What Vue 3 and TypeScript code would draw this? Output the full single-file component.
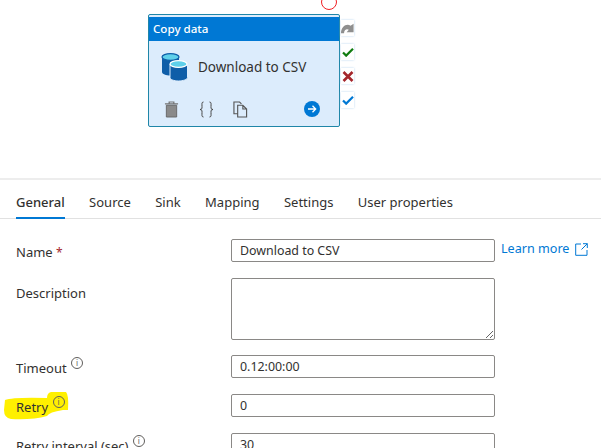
<script setup lang="ts">
const tabs = ['General', 'Source', 'Sink', 'Mapping', 'Settings', 'User properties']
</script>

<template>
  <div class="page">
    <div class="canvas">
      <div class="red-circle"></div>
      <div class="node">
        <div class="node-head">Copy data</div>
        <div class="node-body">
          <svg class="db" width="34" height="30" viewBox="0 0 34 30">
            <path d="M1 5v15c0 2 4 3.500 8.500 3.500S18 22 18 20V5z" fill="#0f5ea8" />
            <ellipse cx="9.500" cy="5" rx="8.500" ry="3.400" fill="#5fd0ea" stroke="#0f5ea8" stroke-width="1.200" />
            <path d="M9 12v13.500c0 2 4 3.500 8.500 3.500s9-1.500 9-3.500V12z" fill="#0f5ea8" stroke="#dcecfc" stroke-width="1" />
            <ellipse cx="17.500" cy="12" rx="8.500" ry="3.400" fill="#5fd0ea" stroke="#fff" stroke-width="1.200" />
          </svg>
          <span class="node-name">Download to CSV</span>
        </div>
        <div class="node-tools">
          <svg width="15" height="17" viewBox="0 0 16 18">
            <path d="M1 3h14M5.500 3V1h5v2" fill="none" stroke="#737373" stroke-width="1.300" />
            <path d="M2.500 4.500h11V17h-11z" fill="#8a8a8a" stroke="#666" />
          </svg>
          <svg class="braces" width="15" height="17" viewBox="0 0 15 17">
            <path d="M4.500 1C2.500 1 3 3 3 5.500S3 8 1 8.500c2 .5 2 .5 2 3S2.500 16 4.500 16M10.500 1c2 0 1.500 2 1.500 4.500s0 2.500 2 3c-2 .5-2 .5-2 3s.5 4.500-1.500 4.500" fill="none" stroke="#444" stroke-width="1" />
          </svg>
          <svg class="copy" width="15" height="17" viewBox="0 0 16 18">
            <path d="M5 13.500H1V1h6l2 2" fill="none" stroke="#555" stroke-width="1.200" />
            <path d="M5 4.500h5.500l4 4v8.500H5z M10.500 4.500v4h4" fill="none" stroke="#555" stroke-width="1.200" />
          </svg>
          <svg class="go" width="16" height="16" viewBox="0 0 16 16">
            <circle cx="8" cy="8" r="8" fill="#0078d4" />
            <path d="M4 8h7.500M8.500 4.800 11.700 8l-3.200 3.200" fill="none" stroke="#fff" stroke-width="1.300" />
          </svg>
        </div>
        <div class="side">
          <span class="side-btn">
            <svg width="13" height="12" viewBox="0 0 15 12">
              <path d="M0 12C0 4 7 0 11 3.500L14.500 1v10h-8L9 8C7 6.500 3.500 7.500 3.500 12z" fill="#8f8f8f" />
            </svg>
          </span>
          <span class="side-btn">
            <svg width="12" height="10" viewBox="0 0 13 11"><path d="M1 6l3.500 3.500L12 2" fill="none" stroke="#107c10" stroke-width="2.400" /></svg>
          </span>
          <span class="side-btn">
            <svg width="12" height="11" viewBox="0 0 12 11"><path d="M1.500 1l9 9M10.500 1l-9 9" fill="none" stroke="#a4262c" stroke-width="2.600" /></svg>
          </span>
          <span class="side-btn">
            <svg width="12" height="10" viewBox="0 0 13 11"><path d="M1 6l3.500 3.500L12 2" fill="none" stroke="#0078d4" stroke-width="2.400" /></svg>
          </span>
        </div>
      </div>
    </div>

    <div class="tabs">
      <span v-for="(tab, i) in tabs" :key="tab" :class="['tab', { active: i === 0 }]">{{ tab }}</span>
    </div>

    <div class="form">
      <label class="lbl">Name <em>*</em></label>
      <input class="field" value="Download to CSV" />
      <a class="learn">Learn more
        <svg width="13" height="13" viewBox="0 0 13 13">
          <path d="M6 1H.7v11.300H12V7M8 .7h4.300V5M12.300.7 6.500 6.500" fill="none" stroke="#0078d4" stroke-width="1" />
        </svg>
      </a>

      <label class="lbl top">Description</label>
      <textarea class="field area"></textarea>
      <span></span>

      <label class="lbl">Timeout <i class="info">i</i></label>
      <input class="field" value="0.12:00:00" />
      <span></span>

      <label class="lbl">
        <svg class="marker" width="66" height="28" viewBox="0 0 66 28">
          <path d="M2 8Q10 5 44 6 44 1 48 0L63 0Q66 3 65 18L60 18Q46 20 44 24 30 28 8 27 1 26 1 18z" fill="#fff000" />
        </svg>
        <span class="over">Retry <i class="info">i</i></span>
      </label>
      <input class="field" value="0" />
      <span></span>

      <label class="lbl">Retry interval (sec) <i class="info">i</i></label>
      <input class="field" value="30" />
      <span></span>
    </div>
  </div>
</template>

<style>
html,
body {
  margin: 0;
  overflow: hidden;
  background: #fff;
}
</style>

<style scoped>
.page {
  width: 601px;
  height: 448px;
  overflow: hidden;
  font-family: "Noto Sans", "Open Sans", sans-serif;
  font-size: 13px;
  color: #323130;
}

.canvas {
  position: relative;
  height: 178px;
  border-bottom: 2px solid #ededed;
}

.red-circle {
  position: absolute;
  left: 321px;
  top: -6px;
  width: 14px;
  height: 14px;
  border: 1px solid #f01e23;
  border-radius: 50%;
}

.node {
  position: absolute;
  left: 148px;
  top: 14px;
  width: 190px;
  height: 109px;
  padding-top: 2px;
  background: #dcecfc;
  border: 1px solid #1f86a8;
  border-radius: 2px;
}

.node-head {
  height: 24px;
  line-height: 24px;
  padding-left: 4px;
  background: #0078d4;
  color: #fff;
  font-size: 11.600px;
  font-weight: 500;
}

.node-body {
  display: flex;
  align-items: center;
  height: 44px;
  padding-left: 12px;
  margin-top: 4px;
}

.db {
  margin-right: 3px;
}

.node-name {
  font-size: 13.500px;
  color: #323130;
}

.node-tools {
  display: flex;
  align-items: center;
  height: 24px;
  padding-left: 15px;
  margin-top: 8px;
}

.braces {
  margin-left: 20px;
}

.copy {
  margin-left: 19px;
}

.go {
  margin-left: 56px;
}

.side {
  position: absolute;
  left: 192px;
  top: 5px;
  display: flex;
  flex-direction: column;
  gap: 8px;
}

.side-btn {
  display: flex;
  align-items: center;
  justify-content: center;
  width: 13px;
  height: 16px;
  background: #fff;
  box-shadow: 0 0 2px #b5d4ee;
}

.tabs {
  display: flex;
  gap: 24.400px;
  height: 39px;
  padding-left: 16px;
  border-bottom: 1px solid #e1e1e1;
  box-sizing: border-box;
}

.tab {
  height: 39px;
  line-height: 44px;
  box-sizing: border-box;
  font-size: 13px;
}

.tab.active {
  border-bottom: 2px solid #0078d4;
  font-weight: 500;
}

.form {
  display: grid;
  grid-template-columns: 215px 264px 1fr;
  row-gap: 16px;
  align-items: center;
  padding: 20px 0 0 16px;
}

.lbl {
  position: relative;
  padding-top: 3px;
  font-size: 13px;
  white-space: nowrap;
}

.lbl em {
  font-style: normal;
  font-size: 12px;
  color: #a4262c;
}

.top {
  align-self: start;
  padding-top: 6px;
}

.field {
  box-sizing: border-box;
  width: 264px;
  height: 23px;
  padding: 0 8px;
  border: 1px solid #8a8886;
  border-radius: 2px;
  font: 12.400px "Noto Sans", "Open Sans", sans-serif;
  color: #323130;
  background: #fff;
  outline: none;
}

.area {
  display: block;
  height: 62px;
  margin-bottom: -1px;
  resize: both;
}

.learn {
  display: flex;
  align-self: start;
  align-items: center;
  gap: 6px;
  margin-left: 6px;
  padding-top: 1px;
  line-height: 18px;
  color: #0078d4;
  font-size: 12.600px;
  white-space: nowrap;
}

.info {
  display: inline-block;
  position: relative;
  top: -7px;
  width: 10px;
  height: 10px;
  margin-left: 1px;
  border: 1px solid #605e5c;
  border-radius: 50%;
  font: 8px/10px "Noto Sans", sans-serif;
  text-align: center;
  color: #605e5c;
}

.marker {
  position: absolute;
  left: -13px;
  top: -3px;
}

.over {
  position: relative;
}
</style>
